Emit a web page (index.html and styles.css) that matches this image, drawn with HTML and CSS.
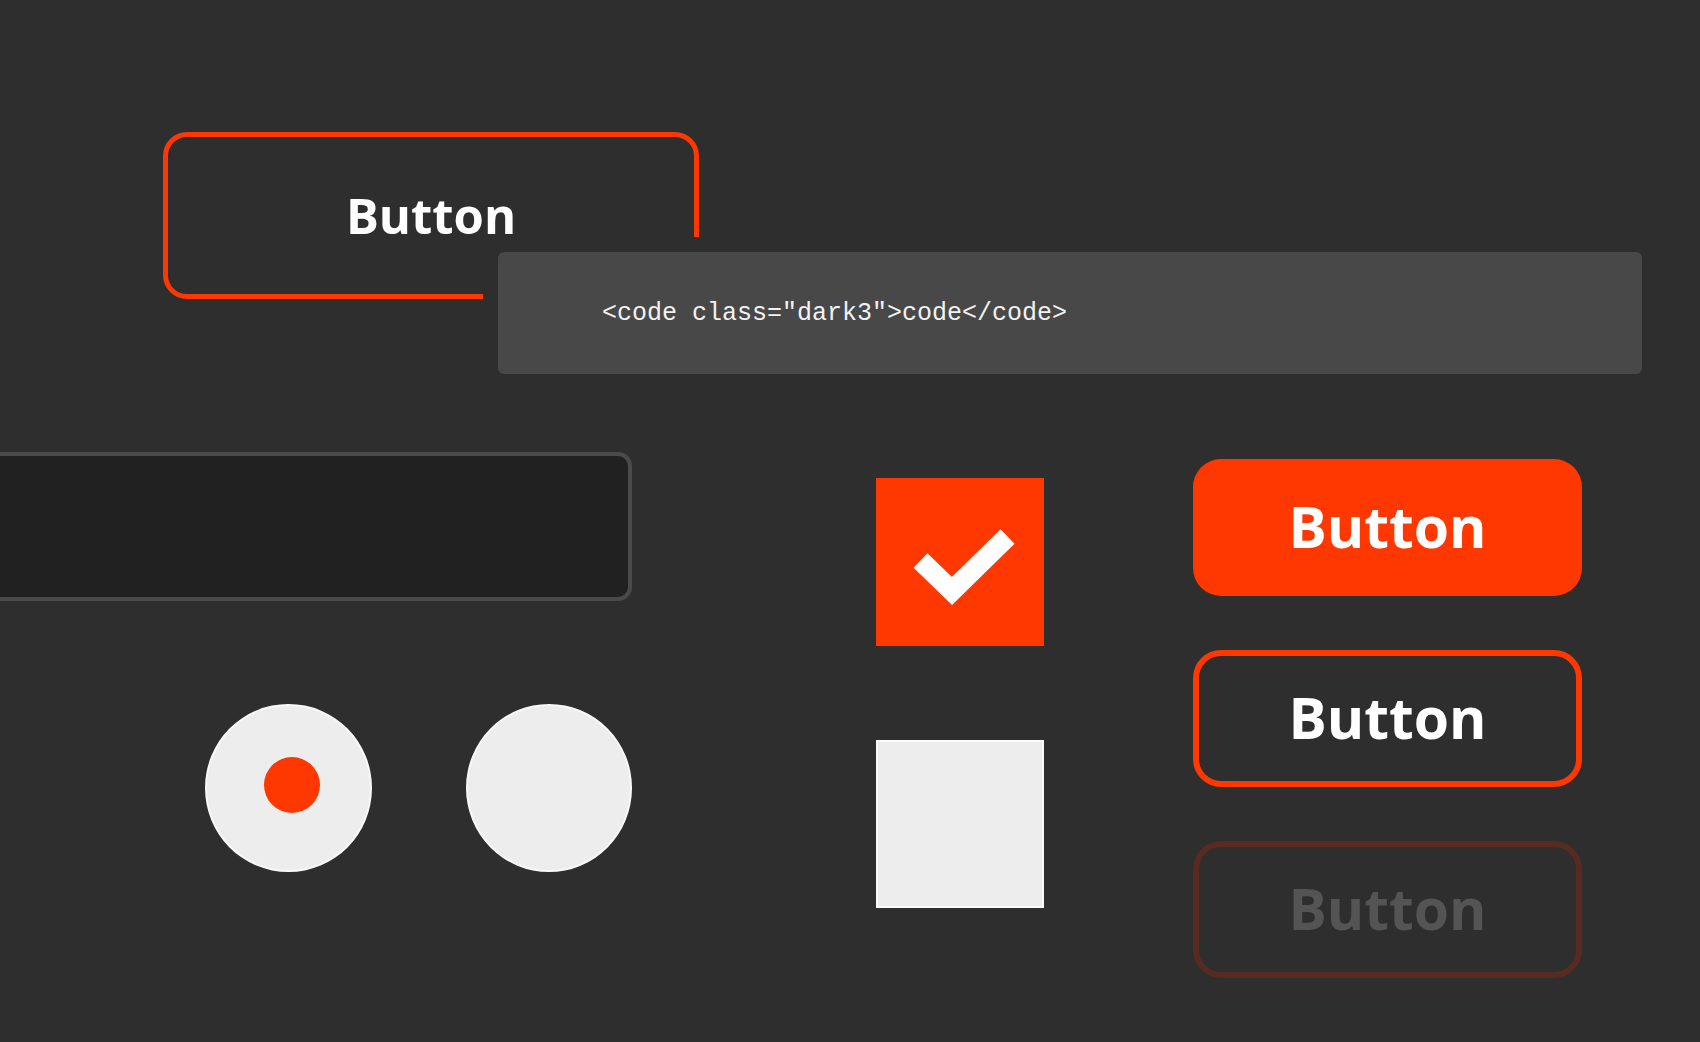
FILE: index.html
```html
<!DOCTYPE html>
<html lang="en">
<head>
<meta charset="utf-8">
<title>UI Kit</title>
<link rel="stylesheet" href="styles.css">
</head>
<body>
<div class="page">
  <section class="top">
    <button class="btn btn-hero">Button</button>
    <div class="code-block"><code class="dark3">&lt;code class="dark3"&gt;code&lt;/code&gt;</code></div>
  </section>
  <section class="controls">
    <div class="col-left">
      <div class="text-input"></div>
      <div class="radios">
        <span class="radio checked"><span class="radio-dot"></span></span>
        <span class="radio"></span>
      </div>
    </div>
    <div class="col-mid">
      <span class="checkbox checked">
        <svg width="168" height="168" viewBox="0 0 168 168"><polyline points="44.5,82.5 76,113 131.5,58.5" fill="none" stroke="#ffffff" stroke-width="20" stroke-linecap="butt" stroke-linejoin="miter"/></svg>
      </span>
      <span class="checkbox"></span>
    </div>
    <div class="col-right">
      <button class="btn btn-fill">Button</button>
      <button class="btn btn-outline">Button</button>
      <button class="btn btn-disabled" disabled>Button</button>
    </div>
  </section>
</div>
</body>
</html>
```
FILE: styles.css
```css
html, body {
  margin: 0;
  padding: 0;
}
body {
  background: #2e2e2e;
  width: 1700px;
  height: 1042px;
  overflow: hidden;
  font-family: "Open Sans", "Noto Sans", sans-serif;
}
.page {
  padding-top: 132px;
}
.top {
  position: relative;
  height: 320px;
}
.btn {
  box-sizing: border-box;
  display: flex;
  align-items: center;
  justify-content: center;
  font-family: "Open Sans", "Noto Sans", sans-serif;
  color: #ffffff;
  background: transparent;
  padding: 0;
  margin: 0;
  cursor: pointer;
}
.btn-hero {
  margin-left: 163px;
  width: 536px;
  height: 167px;
  border: 5px solid #ff3700;
  border-radius: 24px;
  font-size: 49px;
  font-weight: 700;
  padding-bottom: 2px;
}
.code-block {
  position: absolute;
  left: 498px;
  top: 120px;
  width: 1144px;
  height: 122px;
  box-sizing: border-box;
  background: #484848;
  border-radius: 6px;
  box-shadow: 0 0 0 15px #2e2e2e;
  display: flex;
  align-items: center;
  padding-left: 104px;
}
.code-block code {
  font-family: "Liberation Mono", "DejaVu Sans Mono", monospace;
  font-size: 25px;
  color: #f2f2f2;
  white-space: pre;
}
.controls {
  display: flex;
  align-items: flex-start;
}
.col-left {
  width: 632px;
  display: flex;
  flex-direction: column;
}
.text-input {
  box-sizing: border-box;
  margin-left: -30px;
  width: 662px;
  height: 149px;
  background: #212121;
  border: 4px solid #4a4a4a;
  border-radius: 14px;
}
.radios {
  display: flex;
  gap: 94px;
  margin-top: 103px;
  padding-left: 205px;
}
.radio {
  box-sizing: border-box;
  width: 168px;
  height: 168px;
  border-radius: 50%;
  background: #ededed;
  border: 2px solid #f8f8f8;
  display: flex;
  align-items: center;
  justify-content: center;
}
.radio-dot {
  width: 56px;
  height: 56px;
  border-radius: 50%;
  background: #ff3700;
  margin-left: 8px;
  margin-top: -7px;
}
.col-mid {
  margin-left: 244px;
  margin-top: 26px;
  display: flex;
  flex-direction: column;
  gap: 94px;
}
.checkbox {
  box-sizing: border-box;
  display: block;
  width: 168px;
  height: 168px;
  background: #ededed;
  border: 2px solid #fafafa;
}
.checkbox svg {
  display: block;
  margin: -2px;
}
.checkbox.checked {
  background: #ff3700;
  border: none;
}
.checkbox.checked svg {
  margin: 0;
}
.col-right {
  margin-left: 149px;
  margin-top: 7px;
  display: flex;
  flex-direction: column;
  gap: 54px;
}
.btn-fill,
.btn-outline,
.btn-disabled {
  width: 389px;
  height: 137px;
  border-radius: 28px;
  font-size: 57px;
  font-weight: 700;
  padding-bottom: 4px;
}
.btn-fill {
  background: #ff3700;
  border: none;
}
.btn-outline {
  border: 6px solid #ff3700;
}
.btn-disabled {
  border: 6px solid #572b22;
  color: #545454;
  cursor: default;
}
```
